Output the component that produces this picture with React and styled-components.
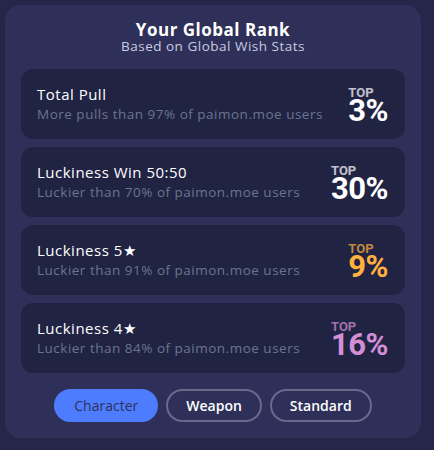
import React from "react";
import styled, { createGlobalStyle } from "styled-components";

const Global = createGlobalStyle`
  html, body { margin: 0; padding: 0; background: #25264a; }
  body { font-family: "Open Sans", "Noto Sans", sans-serif; }
  * { box-sizing: border-box; }
`;

const Page = styled.div`
  padding: 5px 13px 12px 5px;
`;

const Card = styled.section`
  width: 416px;
  background: #2e3059;
  border-radius: 16px;
  padding: 16px;
  display: flex;
  flex-direction: column;
`;

const Header = styled.header`
  text-align: center;
  margin-bottom: 15px;
`;

const Title = styled.h1`
  margin: 0;
  font-size: 17px;
  line-height: 17px;
  font-weight: 700;
  letter-spacing: 0.5px;
  color: #ffffff;
`;

const Subtitle = styled.p`
  margin: 0;
  font-size: 13.5px;
  line-height: 16px;
  letter-spacing: 0.5px;
  color: #c9cbe0;
`;

const List = styled.div`
  display: flex;
  flex-direction: column;
  gap: 8px;
`;

const Row = styled.div`
  height: 70px;
  background: #212343;
  border-radius: 12px;
  padding: 0 17px 0 16px;
  display: flex;
  align-items: center;
  justify-content: space-between;
`;

const Info = styled.div`
  display: flex;
  flex-direction: column;
`;

const RowTitle = styled.div`
  font-size: 15px;
  line-height: 21px;
  font-weight: 500;
  letter-spacing: 0.5px;
  color: #ffffff;
`;

const RowSub = styled.div`
  font-size: 13.5px;
  line-height: 19px;
  letter-spacing: 0.5px;
  color: #6a7590;
`;

const Rank = styled.div`
  display: flex;
  flex-direction: column;
  align-items: flex-start;
  padding-top: 2px;
  color: ${(p) => p.$color};
  font-family: "Roboto", "Open Sans", sans-serif;
  font-weight: 700;
`;

const Top = styled.span`
  font-size: 13px;
  line-height: 11px;
  opacity: 0.72;
`;

const Pct = styled.span`
  font-size: 31px;
  line-height: 25px;
  letter-spacing: -0.5px;
`;

const Tabs = styled.div`
  display: flex;
  justify-content: center;
  gap: 8px;
  margin-top: 16px;
`;

const Tab = styled.button`
  height: 33px;
  padding: 0 18px;
  border-radius: 999px;
  font-family: "Open Sans", sans-serif;
  font-size: 14px;
  cursor: pointer;
  border: 2px solid ${(p) => (p.$active ? "#4e7cff" : "#686a8c")};
  background: ${(p) => (p.$active ? "#4e7cff" : "transparent")};
  color: ${(p) => (p.$active ? "#2d325a" : "#ffffff")};
  font-weight: ${(p) => (p.$active ? 400 : 600)};
`;

const rows = [
  { title: "Total Pull", sub: "More pulls than 97% of paimon.moe users", pct: "3%", color: "#ffffff" },
  { title: "Luckiness Win 50:50", sub: "Luckier than 70% of paimon.moe users", pct: "30%", color: "#ffffff" },
  { title: "Luckiness 5★", sub: "Luckier than 91% of paimon.moe users", pct: "9%", color: "#ffb13f" },
  { title: "Luckiness 4★", sub: "Luckier than 84% of paimon.moe users", pct: "16%", color: "#d28fd6" },
];

export default function App() {
  return (
    <>
      <Global />
      <Page>
        <Card>
          <Header>
            <Title>Your Global Rank</Title>
            <Subtitle>Based on Global Wish Stats</Subtitle>
          </Header>
          <List>
            {rows.map((r) => (
              <Row key={r.title}>
                <Info>
                  <RowTitle>{r.title}</RowTitle>
                  <RowSub>{r.sub}</RowSub>
                </Info>
                <Rank $color={r.color}>
                  <Top>TOP</Top>
                  <Pct>{r.pct}</Pct>
                </Rank>
              </Row>
            ))}
          </List>
          <Tabs>
            <Tab $active>Character</Tab>
            <Tab>Weapon</Tab>
            <Tab>Standard</Tab>
          </Tabs>
        </Card>
      </Page>
    </>
  );
}
